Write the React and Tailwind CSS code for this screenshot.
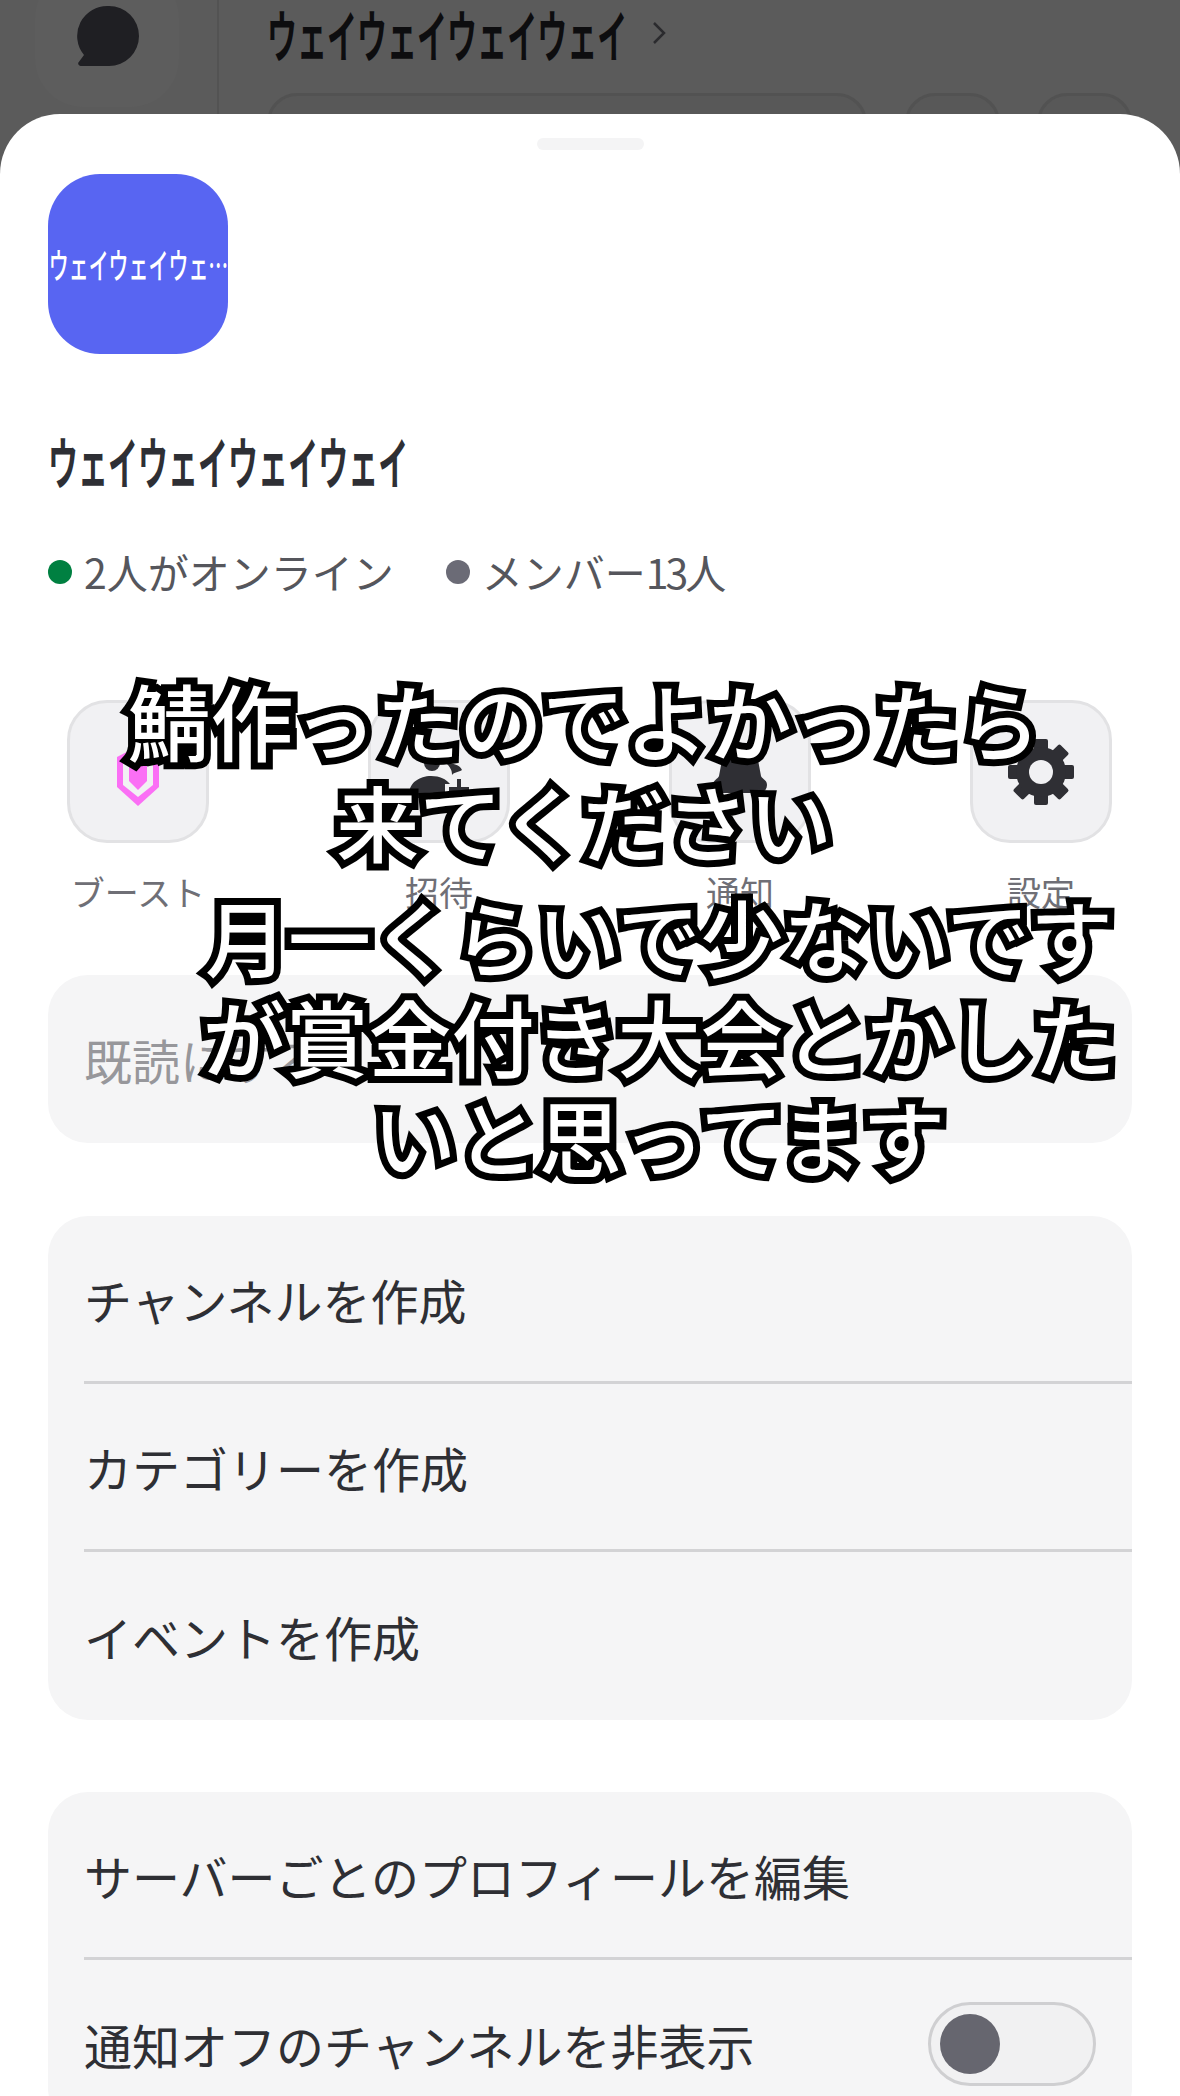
const GEAR_TEETH = [0, 45, 90, 135, 180, 225, 270, 315];

function ShieldIcon() {
  return (
    <svg className="mt-[8px]" width="42" height="60" viewBox="0 0 42 60">
      <path d="M21 0 42 11v30L21 60 0 41V11z" fill="#fb6ff5" />
      <path d="M21 6 36 14v25L21 51 6 39V14z" fill="#f1f1f3" />
      <path d="M21 11 30 16v19L21 44 12 35V16z" fill="#fb6ff5" />
    </svg>
  );
}

function InviteIcon() {
  return (
    <svg width="60" height="60" viewBox="0 0 60 60" fill="#2f2f34">
      <circle cx="23" cy="21" r="8" />
      <path d="M1 54c-3-11 8-20 21-20 9 0 15 3 19 8h-5v9h-9v5H8c0 1-1 4-3 4-2 0-3-3-4-6z" />
      <path d="M37 21c7 0 14 2 16 7-3 2-8 2-10 5 0-5-2-8-6-12z" />
      <path d="M48 37h4v8h8v4h-8v8h-4v-8h-8v-4h8z" />
    </svg>
  );
}

function BellIcon() {
  return (
    <svg className="-mt-[4px]" width="54" height="46" viewBox="0 0 54 46" fill="#2f2f34">
      <path d="M27 0c8 0 16 5 18 13l3 16c1 3 6 4 6 9 0 5-4 8-8 8H10c-5 0-10-3-10-8 0-5 5-6 6-9l3-16C11 5 19 0 27 0z" />
    </svg>
  );
}

function GearIcon() {
  return (
    <svg width="66" height="66" viewBox="0 0 66 66">
      {GEAR_TEETH.map((deg) => (
        <rect
          key={deg}
          x="26"
          y="0"
          width="14"
          height="16"
          rx="2"
          fill="#2f2f34"
          transform={`rotate(${deg} 33 33)`}
        />
      ))}
      <circle cx="33" cy="33" r="25" fill="#2f2f34" />
      <circle cx="33" cy="33" r="12" fill="#f1f1f3" />
    </svg>
  );
}

function ActionButton({ label, children }) {
  return (
    <div className="flex w-[142px] flex-col items-center">
      <div className="flex h-[143px] w-[142px] items-center justify-center rounded-[40px] border-[3px] border-[#e2e2e4] bg-[#f1f1f3]">
        {children}
      </div>
      <div className="mt-[28px] whitespace-nowrap text-[34px] leading-[42px] text-[#6f6f76]">
        {label}
      </div>
    </div>
  );
}

function Row({ label, last, children, muted }) {
  return (
    <div className={`ml-[36px] flex h-[168px] items-center justify-between pr-[36px] ${last ? "" : "border-b-[3px] border-[#d3d3d5]"}`}>
      <span className={`text-[48px] leading-none ${muted ? "text-[#97979b]" : "text-[#2e2f34]"}`}>
        {label}
      </span>
      {children}
    </div>
  );
}

export default function App() {
  return (
    <div className="relative h-[2096px] w-[1180px] overflow-hidden bg-[#5b5b5b] font-['Noto_Sans_CJK_JP','Noto_Sans',sans-serif]">
      {/* dimmed screen behind the sheet */}
      <div className="flex h-[114px] overflow-hidden">
        <div className="ml-[35px] -mt-[30px] flex h-[137px] w-[144px] items-start justify-center rounded-[48px] bg-[#5d5d5d] pt-[35px]">
          <svg width="64" height="62" viewBox="0 0 64 62" fill="#1f1f23">
            <path d="M34 1a30 30 0 0 1 0 60H6a2.5 2.5 0 0 1-2-4.300L9 50A30 30 0 0 1 34 1z" />
          </svg>
        </div>
        <div className="ml-[38px] w-[2px] bg-[#535353]" />
        <div className="ml-[48px] flex-1">
          <div className="flex h-[66px] items-center">
            <div className="w-[361px]">
              <div className="w-max origin-left scale-x-[.536] text-[56px] font-bold leading-none text-[#0d0d0f]">ウェイウェイウェイウェイ</div>
            </div>
            <svg className="ml-[24px]" width="14" height="24" viewBox="0 0 14 24" fill="none" stroke="#2b2b2e" strokeWidth="2.500">
              <path d="M2 2l10 10L2 22" />
            </svg>
          </div>
          <div className="mt-[27px] flex">
            <div className="h-[60px] w-[600px] rounded-[30px] border-[3px] border-[#525252] bg-[#585858]" />
            <div className="ml-[38px] h-[60px] w-[95px] rounded-[34px] border-[3px] border-[#525252] bg-[#585858]" />
            <div className="ml-[37px] h-[60px] w-[95px] rounded-[34px] border-[3px] border-[#525252] bg-[#585858]" />
          </div>
        </div>
      </div>

      {/* bottom sheet */}
      <div className="h-[1982px] overflow-hidden rounded-t-[60px] bg-white px-[48px]">
        <div className="flex justify-center pt-[24px]">
          <div className="h-[12px] w-[107px] rounded-full bg-[#f4f4f5]" />
        </div>
        <div className="mt-[24px] flex h-[180px] w-[180px] items-center justify-center overflow-hidden rounded-[52px] bg-[#5865f2]">
          <div className="-mt-[2px] w-max shrink-0 scale-x-[.57] whitespace-nowrap text-[35px] font-medium leading-none text-white">ウェイウェイウェ…</div>
        </div>
        <div className="mt-[77px] w-max origin-left scale-x-[.536] text-[56px] font-bold leading-[58px] text-[#2e2f34]">ウェイウェイウェイウェイ</div>
        <div className="mt-[57px] flex items-center text-[41px] leading-[50px] text-[#55565c]">
          <span className="mt-[2px] h-[24px] w-[24px] rounded-full bg-[#008041]" />
          <span className="ml-[12px]">2人がオンライン</span>
          <span className="ml-[52px] mt-[2px] h-[24px] w-[24px] rounded-full bg-[#6b6b76]" />
          <span className="ml-[12px]">メンバー<span className="tracking-[-3px]">13</span>人</span>
        </div>

        <div className="mt-[104px] flex gap-[159px] px-[19px]">
          <ActionButton label="ブースト"><ShieldIcon /></ActionButton>
          <ActionButton label="招待"><InviteIcon /></ActionButton>
          <ActionButton label="通知"><BellIcon /></ActionButton>
          <ActionButton label="設定"><GearIcon /></ActionButton>
        </div>

        <div className="mt-[62px] rounded-[40px] bg-[#f5f5f6]">
          <Row label="既読にする" last muted />
        </div>

        <div className="mt-[73px] rounded-[40px] bg-[#f5f5f6]">
          <Row label="チャンネルを作成" />
          <Row label="カテゴリーを作成" />
          <Row label="イベントを作成" last />
        </div>

        <div className="mt-[72px] rounded-[40px] bg-[#f5f5f6]">
          <Row label="サーバーごとのプロフィールを編集" />
          <Row label="通知オフのチャンネルを非表示" last>
            <div className="flex h-[84px] w-[168px] items-center rounded-full border-[3px] border-[#cfcfd1] bg-[#f1f1f2] pl-[9px]">
              <div className="h-[60px] w-[60px] rounded-full bg-[#66666f]" />
            </div>
          </Row>
        </div>
      </div>

      {/* caption burned over the screen */}
      <div className="absolute left-[84px] top-[669px] w-[1000px] text-center text-[83px] font-medium leading-[101px] text-white [-webkit-text-stroke:14px_#000] [paint-order:stroke_fill]">
        <div>鯖作ったのでよかったら</div>
        <div>来てください</div>
      </div>
      <div className="absolute left-[159px] top-[885px] w-[1000px] text-center text-[83px] font-medium leading-[100px] text-white [-webkit-text-stroke:14px_#000] [paint-order:stroke_fill]">
        <div>月一くらいで少ないです</div>
        <div>が賞金付き大会とかした</div>
        <div>いと思ってます</div>
      </div>
    </div>
  );
}
